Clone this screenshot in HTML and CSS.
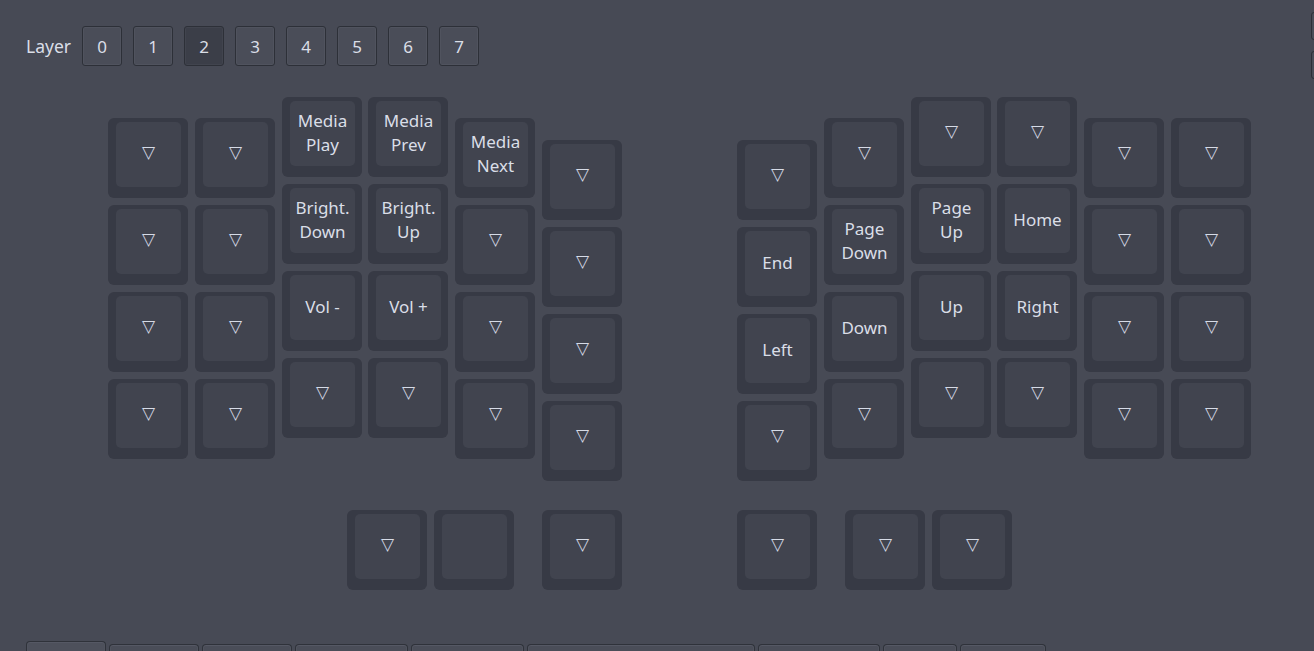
FILE: index.html
```html
<!DOCTYPE html>
<html>
<head>
<meta charset="utf-8">
<link rel="stylesheet" href="styles.css">
</head>
<body>
<div class="app">
  <div class="main">
    <div class="layerbar">
      <span class="layer-label">Layer</span>
      <button class="lbtn">0</button>
      <button class="lbtn">1</button>
      <button class="lbtn lbtn-active">2</button>
      <button class="lbtn">3</button>
      <button class="lbtn">4</button>
      <button class="lbtn">5</button>
      <button class="lbtn">6</button>
      <button class="lbtn">7</button>
    </div>

    <div class="keyboard">
      <div class="halves">
        <div class="half">
          <div class="col off-1">
            <div class="key"><div class="cap tri">▽</div></div>
            <div class="key"><div class="cap tri">▽</div></div>
            <div class="key"><div class="cap tri">▽</div></div>
            <div class="key"><div class="cap tri">▽</div></div>
          </div>
          <div class="col off-1">
            <div class="key"><div class="cap tri">▽</div></div>
            <div class="key"><div class="cap tri">▽</div></div>
            <div class="key"><div class="cap tri">▽</div></div>
            <div class="key"><div class="cap tri">▽</div></div>
          </div>
          <div class="col">
            <div class="key"><div class="cap">Media<br>Play</div></div>
            <div class="key"><div class="cap">Bright.<br>Down</div></div>
            <div class="key"><div class="cap">Vol -</div></div>
            <div class="key"><div class="cap tri">▽</div></div>
          </div>
          <div class="col col-tight">
            <div class="key"><div class="cap">Media<br>Prev</div></div>
            <div class="key"><div class="cap">Bright.<br>Up</div></div>
            <div class="key"><div class="cap">Vol +</div></div>
            <div class="key"><div class="cap tri">▽</div></div>
          </div>
          <div class="col off-1">
            <div class="key"><div class="cap">Media<br>Next</div></div>
            <div class="key"><div class="cap tri">▽</div></div>
            <div class="key"><div class="cap tri">▽</div></div>
            <div class="key"><div class="cap tri">▽</div></div>
          </div>
          <div class="col off-2">
            <div class="key"><div class="cap tri">▽</div></div>
            <div class="key"><div class="cap tri">▽</div></div>
            <div class="key"><div class="cap tri">▽</div></div>
            <div class="key"><div class="cap tri">▽</div></div>
          </div>
        </div>

        <div class="half">
          <div class="col off-2">
            <div class="key"><div class="cap tri">▽</div></div>
            <div class="key"><div class="cap">End</div></div>
            <div class="key"><div class="cap">Left</div></div>
            <div class="key"><div class="cap tri">▽</div></div>
          </div>
          <div class="col off-1">
            <div class="key"><div class="cap tri">▽</div></div>
            <div class="key"><div class="cap">Page<br>Down</div></div>
            <div class="key"><div class="cap">Down</div></div>
            <div class="key"><div class="cap tri">▽</div></div>
          </div>
          <div class="col">
            <div class="key"><div class="cap tri">▽</div></div>
            <div class="key"><div class="cap">Page<br>Up</div></div>
            <div class="key"><div class="cap">Up</div></div>
            <div class="key"><div class="cap tri">▽</div></div>
          </div>
          <div class="col col-tight">
            <div class="key"><div class="cap tri">▽</div></div>
            <div class="key"><div class="cap">Home</div></div>
            <div class="key"><div class="cap">Right</div></div>
            <div class="key"><div class="cap tri">▽</div></div>
          </div>
          <div class="col off-1">
            <div class="key"><div class="cap tri">▽</div></div>
            <div class="key"><div class="cap tri">▽</div></div>
            <div class="key"><div class="cap tri">▽</div></div>
            <div class="key"><div class="cap tri">▽</div></div>
          </div>
          <div class="col off-1">
            <div class="key"><div class="cap tri">▽</div></div>
            <div class="key"><div class="cap tri">▽</div></div>
            <div class="key"><div class="cap tri">▽</div></div>
            <div class="key"><div class="cap tri">▽</div></div>
          </div>
        </div>
      </div>

      <div class="thumbs">
        <div class="thumb-group">
          <div class="key"><div class="cap tri">▽</div></div>
          <div class="key"><div class="cap"></div></div>
        </div>
        <div class="thumb-group">
          <div class="key"><div class="cap tri">▽</div></div>
        </div>
        <div class="thumb-group thumb-right">
          <div class="key"><div class="cap tri">▽</div></div>
        </div>
        <div class="thumb-group">
          <div class="key"><div class="cap tri">▽</div></div>
          <div class="key"><div class="cap tri">▽</div></div>
        </div>
      </div>
    </div>

    <div class="tabbar">
      <div class="tab tab-active w1"></div>
      <div class="tab w2"></div>
      <div class="tab w3"></div>
      <div class="tab w4"></div>
      <div class="tab w5"></div>
      <div class="tab w6"></div>
      <div class="tab w7"></div>
      <div class="tab w8"></div>
      <div class="tab w9"></div>
    </div>
  </div>

  <div class="side">
    <div class="side-btn"></div>
    <div class="side-btn"></div>
  </div>
</div>
</body>
</html>
```

FILE: styles.css
```css
html, body {
  margin: 0;
  padding: 0;
  background: #474a55;
}

body {
  width: 1314px;
  height: 651px;
  overflow: hidden;
  font-family: "Noto Sans", "DejaVu Sans", sans-serif;
  color: #dadee7;
}

.app {
  display: flex;
  width: 1314px;
  height: 651px;
  overflow: hidden;
}

.main {
  flex: 0 0 1311px;
  display: flex;
  flex-direction: column;
}

/* ---------- layer selector ---------- */
.layerbar {
  display: flex;
  align-items: center;
  gap: 11px;
  padding: 26px 0 0 26px;
}

.layer-label {
  font-size: 17.5px;
  line-height: 40px;
}

.lbtn {
  width: 40px;
  height: 40px;
  box-sizing: border-box;
  border: 1px solid #2d3038;
  border-radius: 3px;
  background: #4a4d58;
  box-shadow: inset 0 0 0 1px #50535e;
  color: #dadee7;
  font-family: "Noto Sans", "DejaVu Sans", sans-serif;
  font-size: 17px;
  padding: 0;
}

.lbtn-active {
  background: #3b3e48;
  box-shadow: inset 0 0 0 1px #41444e;
}

/* ---------- keyboard ---------- */
.keyboard {
  margin-top: 31px;
  padding-left: 108px;
}

.halves {
  display: flex;
  gap: 115px;
}

.half {
  display: flex;
  gap: 7px;
  align-items: flex-start;
}

.col {
  display: flex;
  flex-direction: column;
  gap: 7px;
}

.col-tight { margin-left: -1px; }

.off-1 { padding-top: 21px; }
.off-2 { padding-top: 43px; }

.key {
  width: 80px;
  height: 80px;
  box-sizing: border-box;
  padding: 4px 7px 11px 8px;
  background: #373a45;
  border-radius: 6px;
  display: flex;
}

.cap {
  flex: 1;
  background: #41444f;
  border-radius: 5px;
  display: flex;
  align-items: center;
  justify-content: center;
  text-align: center;
  font-size: 17px;
  line-height: 24px;
  padding-bottom: 2px;
}

.tri {
  font-family: "DejaVu Sans", sans-serif;
  font-weight: bold;
  font-size: 17px;
  padding-bottom: 5px;
  color: #d6dbe6;
}

.thumbs {
  display: flex;
  margin-top: 29px;
  padding-left: 239px;
  gap: 28px;
}

.thumb-group {
  display: flex;
  gap: 7px;
}

.thumb-right {
  margin-left: 87px;
}

/* ---------- tabs ---------- */
.tabbar {
  display: flex;
  align-items: flex-start;
  gap: 3px;
  margin-top: 51px;
  padding-left: 26px;
}

.tab {
  height: 30px;
  margin-top: 3px;
  box-sizing: border-box;
  border: 1px solid #2f323a;
  border-bottom: none;
  border-radius: 4px 4px 0 0;
  background: #4a4d58;
  box-shadow: inset 0 1px 0 #555864, inset 1px 0 0 #50535e, inset -1px 0 0 #50535e;
}

.tab-active {
  margin-top: 0;
  background: #4d505b;
}

.w1 { width: 80px; }
.w2 { width: 90px; }
.w3 { width: 90px; }
.w4 { width: 113px; }
.w5 { width: 113px; }
.w6 { width: 228px; }
.w7 { width: 122px; }
.w8 { width: 74px; }
.w9 { width: 86px; }

/* ---------- side (cut off at right edge) ---------- */
.side {
  flex: 0 0 60px;
  display: flex;
  flex-direction: column;
  gap: 11px;
  padding-top: 12px;
}

.side-btn {
  height: 28px;
  box-sizing: border-box;
  border: 1px solid #2d3038;
  border-radius: 3px;
  background: #4a4d58;
}
```
